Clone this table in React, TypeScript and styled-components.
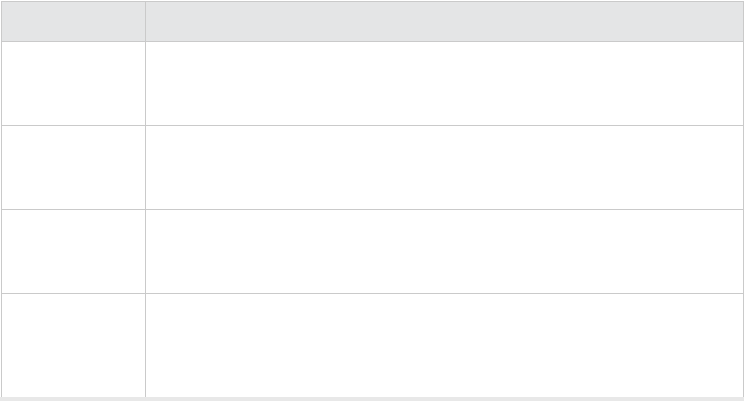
import React from "react";
import styled, { createGlobalStyle } from "styled-components";

const rows = [
    { label: "", value: "", height: 83 },
    { label: "", value: "", height: 83 },
    { label: "", value: "", height: 83 },
    { label: "", value: "", height: 103 },
];

const GlobalStyle = createGlobalStyle`
  html, body {
    margin: 0;
    padding: 0;
    background: #ffffff;
    font-family: "Liberation Sans", Arial, sans-serif;
    font-size: 14px;
    color: #333333;
  }
`;

const App: React.FC = () => {
    return (
        <Page>
            <GlobalStyle />
            <Table>
                <HeadCell />
                <HeadCell />
                {rows.map((row, index) => (
                    <React.Fragment key={index}>
                        <Cell $height={row.height}>{row.label}</Cell>
                        <Cell $height={row.height}>{row.value}</Cell>
                    </React.Fragment>
                ))}
            </Table>
            <ScrollTrack />
        </Page>
    );
};

export default App;

const Page = styled.div`
  display: flex;
  flex-direction: column;
  width: 744px;
  height: 401px;
  padding: 1px 0 0 1px;
  box-sizing: border-box;
  overflow: hidden;
`;

const Table = styled.div`
  display: grid;
  grid-template-columns: 143px 1fr;
  gap: 1px;
  width: 743px;
  box-sizing: border-box;
  padding: 1px 1px 0 1px;
  background: #cacaca;
`;

const HeadCell = styled.div`
  height: 39px;
  background: #e4e5e6;
`;

const Cell = styled.div<{ $height: number }>`
  height: ${(p) => p.$height}px;
  background: #ffffff;
  padding: 8px 10px;
  box-sizing: border-box;
`;

const ScrollTrack = styled.div`
  flex: 1;
  margin-left: -1px;
  background: #e8e8e8;
`;
